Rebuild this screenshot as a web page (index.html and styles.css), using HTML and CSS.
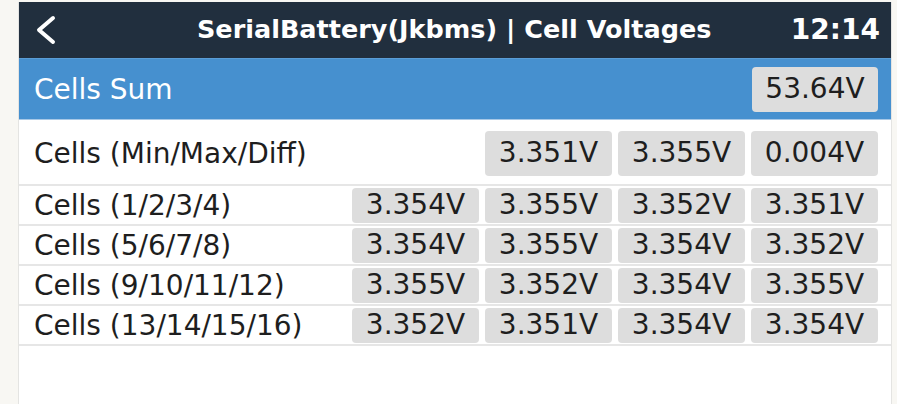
FILE: index.html
```html
<!DOCTYPE html>
<html>
<head>
<meta charset="utf-8">
<link rel="stylesheet" href="styles.css">
</head>
<body>
<div class="screen">
  <header class="topbar">
    <svg class="back" width="24" height="32" viewBox="0 0 24 32"><path d="M18 4 L4 16 L18 28" fill="none" stroke="#ffffff" stroke-width="4" stroke-linecap="round" stroke-linejoin="round"/></svg>
    <div class="title">SerialBattery(Jkbms) | Cell Voltages</div>
    <div class="clock">12:14</div>
  </header>
  <div class="row row-sum">
    <span class="label">Cells Sum</span>
    <div class="vals"><span class="val">53.64V</span></div>
  </div>
  <div class="row row-big">
    <span class="label">Cells (Min/Max/Diff)</span>
    <div class="vals"><span class="val">3.351V</span><span class="val">3.355V</span><span class="val">0.004V</span></div>
  </div>
  <div class="row">
    <span class="label">Cells (1/2/3/4)</span>
    <div class="vals"><span class="val">3.354V</span><span class="val">3.355V</span><span class="val">3.352V</span><span class="val">3.351V</span></div>
  </div>
  <div class="row">
    <span class="label">Cells (5/6/7/8)</span>
    <div class="vals"><span class="val">3.354V</span><span class="val">3.355V</span><span class="val">3.354V</span><span class="val">3.352V</span></div>
  </div>
  <div class="row">
    <span class="label">Cells (9/10/11/12)</span>
    <div class="vals"><span class="val">3.355V</span><span class="val">3.352V</span><span class="val">3.354V</span><span class="val">3.355V</span></div>
  </div>
  <div class="row">
    <span class="label">Cells (13/14/15/16)</span>
    <div class="vals"><span class="val">3.352V</span><span class="val">3.351V</span><span class="val">3.354V</span><span class="val">3.354V</span></div>
  </div>
</div>
</body>
</html>
```
FILE: styles.css
```css
html, body {
  margin: 0;
  padding: 0;
  background: #f8f7f3;
  height: 404px;
  overflow: hidden;
}
.screen {
  margin: 2px 0 0 18px;
  width: 872px;
  height: 402px;
  background: #ffffff;
  border-left: 1px solid #e4e4e2;
  border-right: 1px solid #e4e4e2;
  font-family: "DejaVu Sans", "Liberation Sans", sans-serif;
  color: #1e1e1e;
}
.topbar {
  height: 56px;
  background: #212f3e;
  display: flex;
  align-items: center;
  color: #ffffff;
  font-weight: bold;
}
.back {
  margin-left: 16px;
  flex: none;
}
.title {
  margin-left: 138px;
  font-size: 25.5px;
  margin-top: -3px;
  white-space: nowrap;
}
.clock {
  margin-left: auto;
  margin-right: 11px;
  font-size: 28px;
  margin-top: -1px;
}
.row {
  display: flex;
  align-items: center;
  justify-content: space-between;
  height: 38px;
  padding: 0 13px 0 15px;
  border-bottom: 2px solid #e6e6e6;
  font-size: 28px;
}
.row-sum {
  height: 60px;
  background: #4690cf;
  color: #ffffff;
  border-top: 1px solid #5a9dd6;
  border-bottom: 1px solid #a8c8e6;
}
.row-big {
  height: 62px;
  padding-top: 2px;
}
.label {
  white-space: nowrap;
}
.vals {
  display: flex;
  gap: 6px;
}
.val {
  width: 127px;
  height: 35px;
  line-height: 33px;
  text-align: center;
  background: #dddddd;
  border-radius: 4px;
  color: #1e1e1e;
}
.row-sum .val,
.row-big .val {
  height: 45px;
  line-height: 44px;
}
.row-sum .val {
  width: 126px;
}
```
